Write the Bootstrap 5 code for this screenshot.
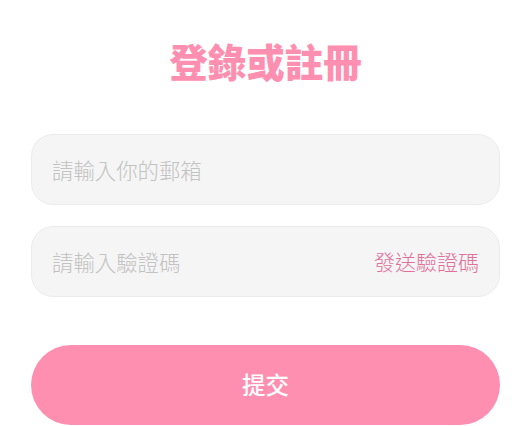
<!DOCTYPE html>
<html lang="zh-Hant"><head><meta charset="utf-8">
<link href="https://cdn.jsdelivr.net/npm/bootstrap@5.3.0/dist/css/bootstrap.min.css" rel="stylesheet">
<style>
html,body{height:426px;overflow:hidden;background:#fff;}
body{font-family:"Noto Sans CJK TC","Noto Sans CJK SC",sans-serif;}
.page-wrap{padding:0 32px 0 31px;}
.ttl{font-size:38.5px;font-weight:900;color:#ff8fb1;line-height:50px;margin:35px 0 49px;text-align:center;}
.fld{height:71px;background:#f5f5f5;border:1px solid #ececec;border-radius:22px;padding:0 20px 0 20px;margin-bottom:21px;}
.fld input{border:0;background:transparent;outline:0;flex:1;min-width:0;padding:0;font-size:21.4px;font-weight:300;color:#333;margin-top:1px;}
.fld input::placeholder{color:#c2c2c2;opacity:1;}
.snd{color:#e0709a;font-size:21px;font-weight:300;white-space:nowrap;margin-top:1px;}
.sub{display:block;width:100%;height:80px;margin-top:48px;border:0;border-radius:40px;background:#ff8fb1;color:#fff;font-size:23.5px;font-weight:500;padding:0;}
</style></head><body>
<div class="page-wrap">
<h1 class="ttl">登錄或註冊</h1>
<div class="fld d-flex align-items-center"><input type="text" placeholder="請輸入你的郵箱"></div>
<div class="fld d-flex align-items-center"><input type="text" placeholder="請輸入驗證碼"><span class="snd">發送驗證碼</span></div>
<button class="sub" type="button">提交</button>
</div>
<script src="https://cdn.jsdelivr.net/npm/bootstrap@5.3.0/dist/js/bootstrap.bundle.min.js"></script>
</body></html>
